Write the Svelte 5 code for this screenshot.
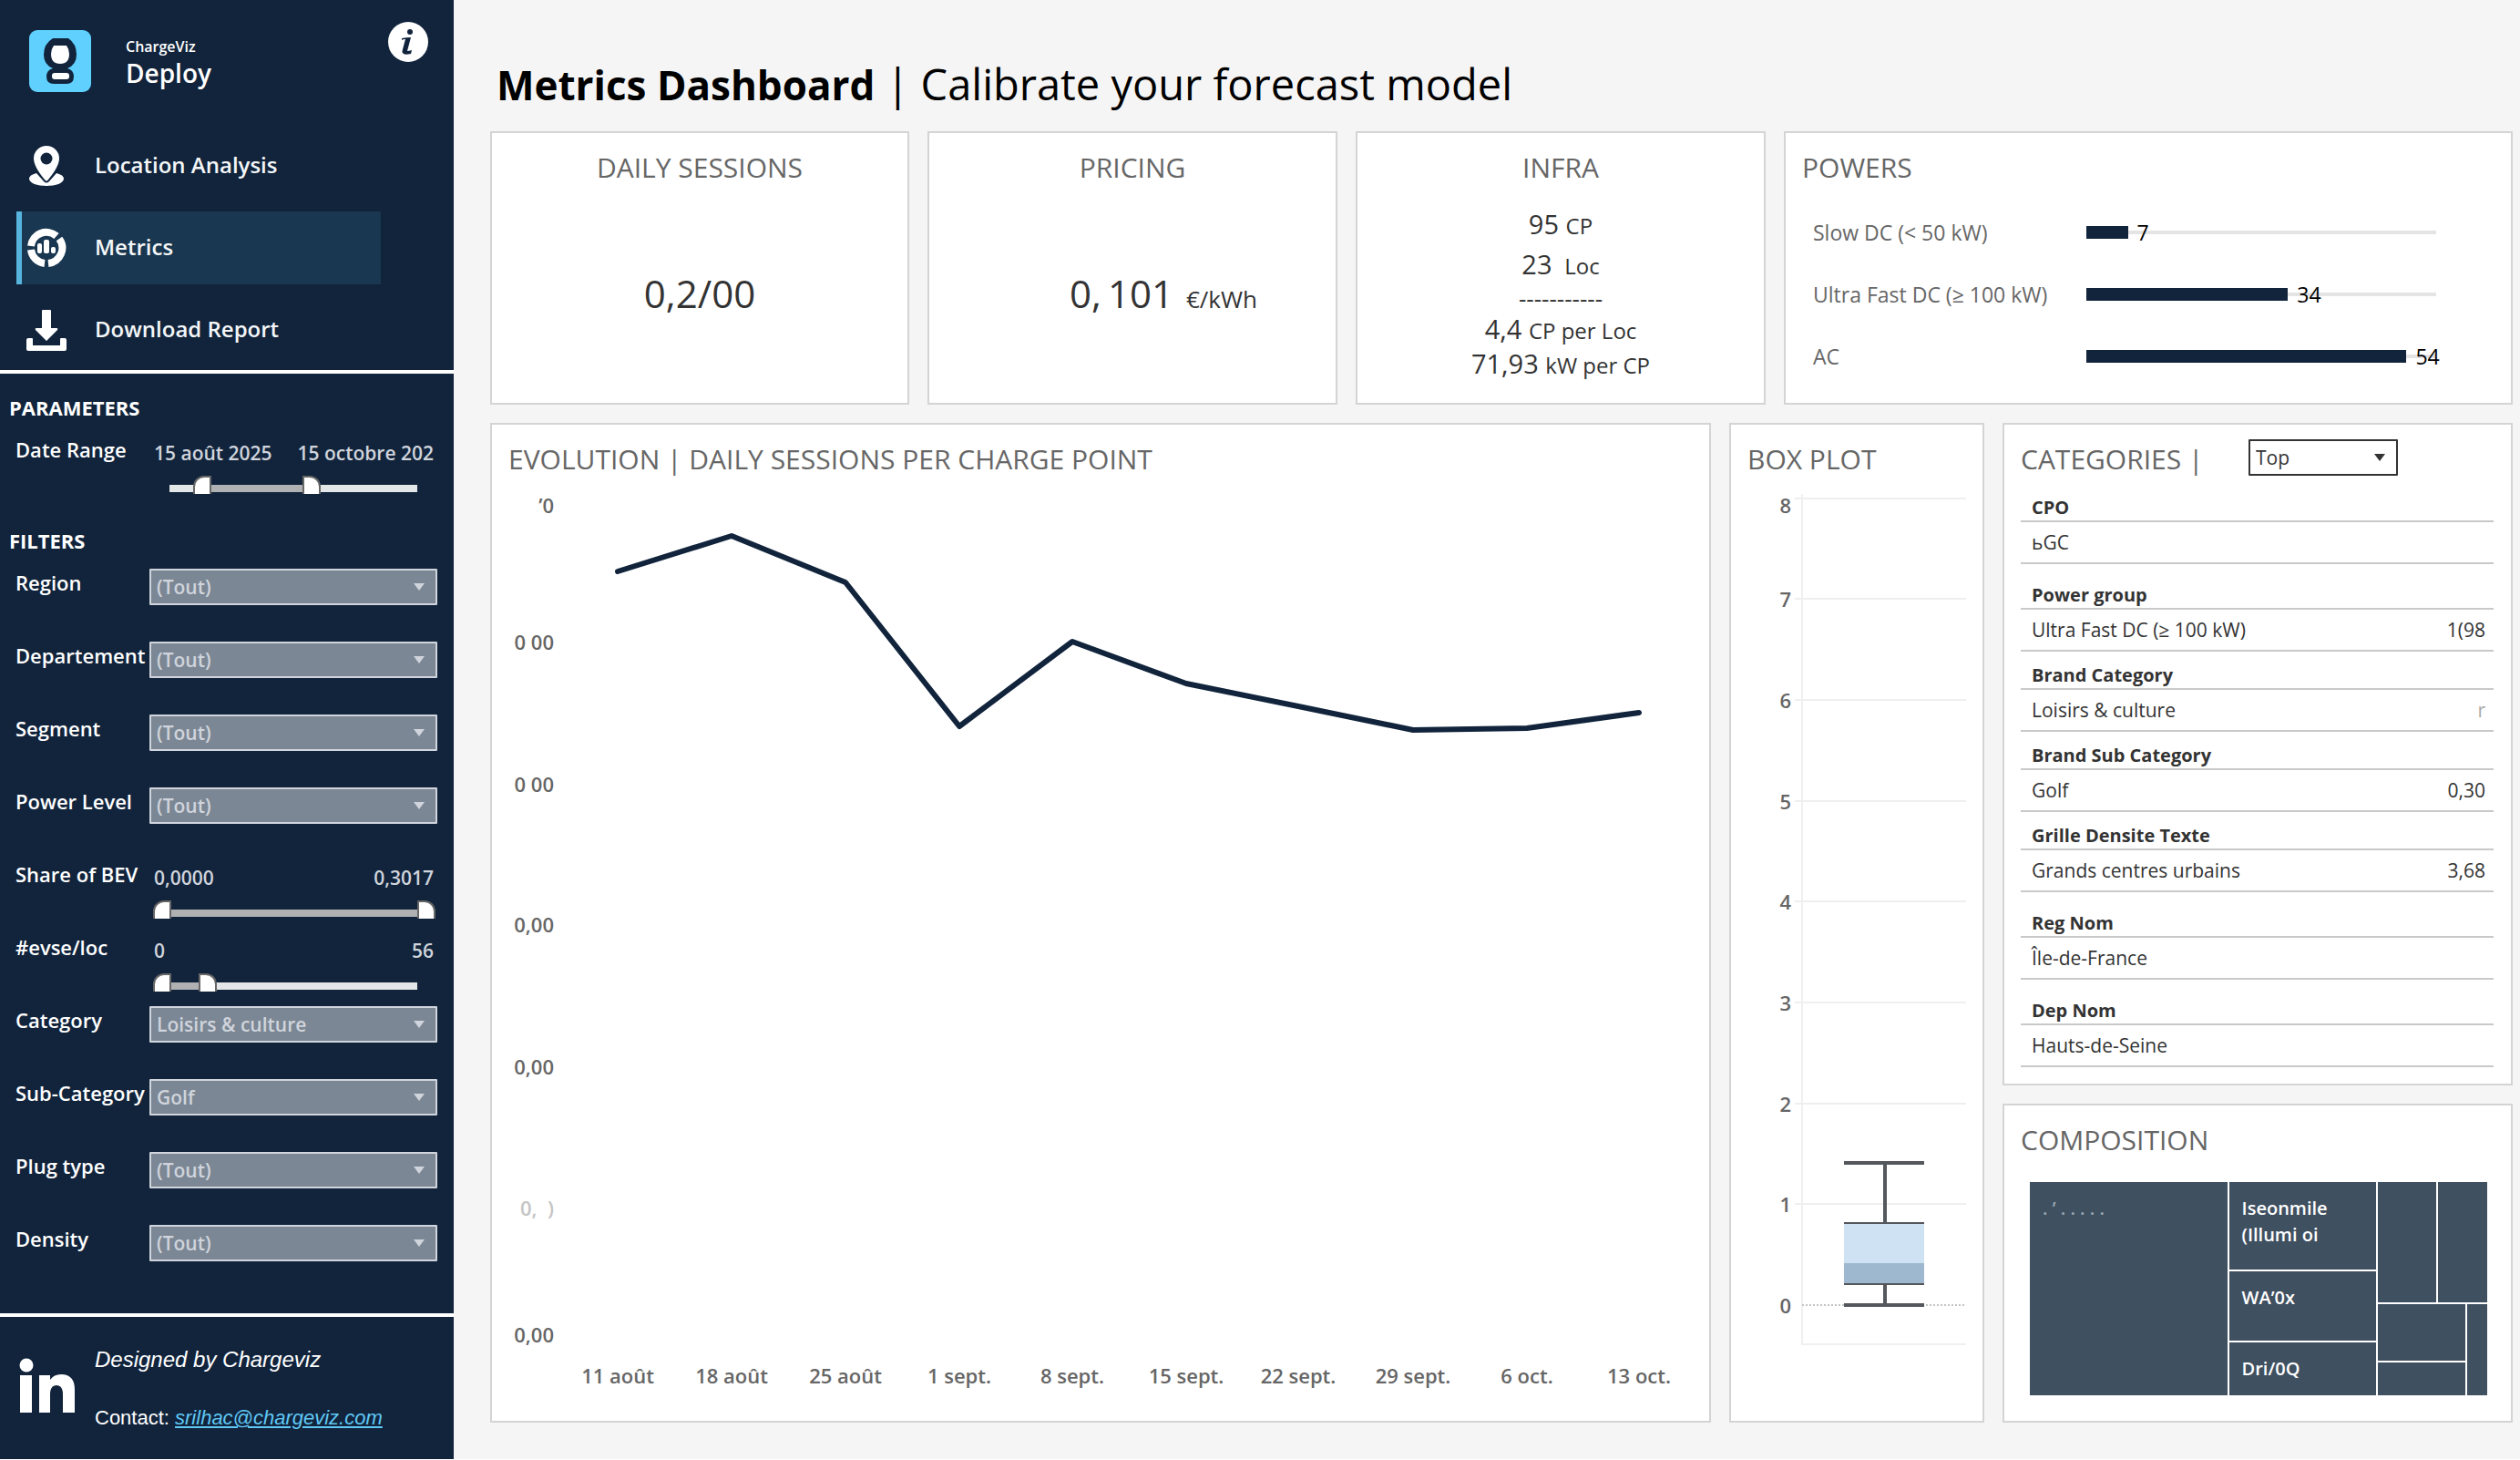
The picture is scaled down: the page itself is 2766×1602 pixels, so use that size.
<script>
  let filters = $state([
    { id: 'region', label: 'Region', type: 'select', value: '(Tout)' },
    { id: 'departement', label: 'Departement', type: 'select', value: '(Tout)' },
    { id: 'segment', label: 'Segment', type: 'select', value: '(Tout)' },
    { id: 'power', label: 'Power Level', type: 'select', value: '(Tout)' },
    { id: 'bev', label: 'Share of BEV', type: 'range', from: '0,0000', to: '0,3017', low: 0, high: 270 },
    { id: 'evse', label: '#evse/loc', type: 'range', from: '0', to: '56', low: 0, high: 30 },
    { id: 'category', label: 'Category', type: 'select', value: 'Loisirs & culture' },
    { id: 'subcategory', label: 'Sub-Category', type: 'select', value: 'Golf' },
    { id: 'plug', label: 'Plug type', type: 'select', value: '(Tout)' },
    { id: 'density', label: 'Density', type: 'select', value: '(Tout)' }
  ]);

  let dates = $state({
    id: 'dates',
    label: 'Date Range',
    type: 'range',
    from: '15 août 2025',
    to: '15 octobre 202',
    low: 44,
    high: 144
  });

  const powers = [
    { name: 'Slow DC (< 50 kW)', count: 7 },
    { name: 'Ultra Fast DC (≥ 100 kW)', count: 34 },
    { name: 'AC', count: 54 }
  ];
  const powerMax = 59;

  const categories = [
    { title: 'CPO', name: 'ьGC', value: '' },
    { title: 'Power group', name: 'Ultra Fast DC (≥ 100 kW)', value: '1(98', spaced: true },
    { title: 'Brand Category', name: 'Loisirs & culture', value: 'r', faint: true },
    { title: 'Brand Sub Category', name: 'Golf', value: '0,30' },
    { title: 'Grille Densite Texte', name: 'Grands centres urbains', value: '3,68' },
    { title: 'Reg Nom', name: 'Île-de-France', value: '', spaced: true },
    { title: 'Dep Nom', name: 'Hauts-de-Seine', value: '', spaced: true }
  ];

  // chart coordinates, one unit per pixel of the drawing area
  const weeks = [
    { label: '11 août', x: 138, y: 85 },
    { label: '18 août', x: 263, y: 46 },
    { label: '25 août', x: 388, y: 97 },
    { label: '1 sept.', x: 513, y: 255 },
    { label: '8 sept.', x: 637, y: 162 },
    { label: '15 sept.', x: 762, y: 208 },
    { label: '22 sept.', x: 885, y: 233 },
    { label: '29 sept.', x: 1011, y: 259 },
    { label: '6 oct.', x: 1136, y: 257 },
    { label: '13 oct.', x: 1259, y: 240 }
  ];
  const linePoints = weeks.map((w) => `${w.x},${w.y}`).join(' ');

  const yTicks = [
    { label: '’0', y: 12 },
    { label: '0 00', y: 162 },
    { label: '0 00', y: 318 },
    { label: '0,00', y: 472 },
    { label: '0,00', y: 628 },
    { label: '0,\u00a0\u00a0)', y: 783, faint: true },
    { label: '0,00', y: 922 }
  ];

  const boxTicks = [8, 7, 6, 5, 4, 3, 2, 1, 0];
  const boxY = (v) => 890 - v * 111 + Math.round(v / 3);
</script>

{#snippet arrow()}
  <svg class="arrow" viewBox="0 0 12 8" width="12" height="8" aria-hidden="true">
    <path d="M0 0h12L6 8z" fill="currentColor" />
  </svg>
{/snippet}

{#snippet range(f)}
  <div class="range">
    <div class="bounds"><span>{f.from}</span><span>{f.to}</span></div>
    <div class="slider">
      <div class="rail"></div>
      <div class="fill" style="margin-left: {20 + f.low}px; width: {f.high - f.low}px"></div>
      <input id={f.id} class="low" type="range" min="0" max="270" bind:value={f.low} aria-label="{f.label} min" />
      <input class="high" type="range" min="0" max="270" bind:value={f.high} aria-label="{f.label} max" />
    </div>
  </div>
{/snippet}

<div class="page">
  <aside>
    <div class="brand">
      <svg class="logo" viewBox="0 0 68 68" width="68" height="68" aria-hidden="true">
        <rect width="68" height="68" rx="9" fill="#60d1ff" />
        <path d="M26 9h17q9 6 9 18 0 11-10 15 7 2 7 9 0 8-8 8H27q-8 0-8-8 0-7 7-9-10-4-10-15 0-12 10-18z" fill="#11243c" />
        <path d="M27 17h14q3 4 3 9 0 11-10 11T24 26q0-5 3-9z" fill="#fff" />
        <rect x="25" y="47" width="19" height="7" rx="3" fill="#fff" />
      </svg>
      <div class="brand-name">
        <small>ChargeViz</small>
        <strong>Deploy</strong>
      </div>
      <button class="info" aria-label="Information">
        <svg viewBox="0 0 46 46" width="46" height="46" aria-hidden="true">
          <circle cx="23" cy="23" r="22" fill="#fff" />
          <circle cx="25" cy="12" r="3" fill="#11243c" />
          <path d="M16 19q5-1 10-1l-4 15q2 0 5-1l-1 4q-8 2-9-1-1-1 0-4l3-11q-3 0-4 1z" fill="#11243c" />
        </svg>
      </button>
    </div>

    <nav>
      <a href="#location">
        <svg viewBox="0 0 44 48" width="44" height="48" aria-hidden="true">
          <path d="M11 32q-8 2-8 6c0 5 9 8 19 8s19-3 19-8q0-4-8-6l-8 9q-3 3-6 0z" fill="#fff" />
          <path d="M22 2a14 14 0 0 1 14 14c0 8-8 18-12 23q-2 3-4 0C16 34 8 24 8 16A14 14 0 0 1 22 2z" fill="#fff" />
          <circle cx="22" cy="16" r="6.500" fill="#11243c" />
        </svg>
        <span>Location Analysis</span>
      </a>
      <a href="#metrics" class="active">
        <svg viewBox="0 0 44 44" width="44" height="44" aria-hidden="true">
          <g fill="none" stroke="#fff" stroke-width="8">
            <path d="M5 20A17 17 0 0 1 33 9" />
            <path d="M36 12A17 17 0 0 1 24 39" />
            <path d="M20 39A17 17 0 0 1 5 24" />
          </g>
          <g fill="#fff">
            <rect x="12" y="17" width="5" height="11" rx="2" />
            <rect x="19" y="13" width="6" height="15" rx="2" />
            <rect x="27" y="21" width="5" height="7" rx="2" />
          </g>
        </svg>
        <span>Metrics</span>
      </a>
      <a href="#download">
        <svg viewBox="0 0 44 48" width="44" height="48" aria-hidden="true">
          <path d="M18 2h8q1 0 1 1v19h6q2 0 1 2L23 35q-1 2-2 0L10 24q-1-2 1-2h6V3q0-1 1-1z" fill="#fff" />
          <path d="M2 33h4q1 0 1 1v7h30v-7q0-1 1-1h4q2 0 2 2v10q0 2-2 2H2q-2 0-2-2V35q0-2 2-2z" fill="#fff" />
        </svg>
        <span>Download Report</span>
      </a>
    </nav>

    <section class="settings">
      <h2>PARAMETERS</h2>
      <div class="field">
        <label for={dates.id}>{dates.label}</label>
        {@render range(dates)}
      </div>
      <h2 class="second">FILTERS</h2>
      {#each filters as f}
        <div class="field">
          <label for={f.id}>{f.label}</label>
          {#if f.type === 'range'}
            {@render range(f)}
          {:else}
            <div class="select">
              <select id={f.id}><option>{f.value}</option></select>
              {@render arrow()}
            </div>
          {/if}
        </div>
      {/each}
    </section>

    <footer>
      <svg viewBox="0 0 62 62" width="62" height="62" aria-hidden="true">
        <g fill="#fff">
          <circle cx="8" cy="8" r="7.500" />
          <rect x="1" y="19" width="13" height="41" />
          <path d="M22 19h12v5q4-6 12-6 15 0 15 17v25H48V40q0-10-7-10t-7 10v20H22z" />
        </g>
      </svg>
      <div class="credits">
        <em>Designed by Chargeviz</em>
        <p>Contact: <a href="mailto:srilhac@chargeviz.com">srilhac@chargeviz.com</a></p>
      </div>
    </footer>
  </aside>

  <main>
    <h1><b>Metrics Dashboard</b> | Calibrate your forecast model</h1>

    <div class="kpis">
      <article class="card center">
        <h3>DAILY SESSIONS</h3>
        <p class="figure">0,2/00</p>
      </article>
      <article class="card center">
        <h3>PRICING</h3>
        <p class="figure with-unit">0,&thinsp;101 <small>€/kWh</small></p>
      </article>
      <article class="card center">
        <h3>INFRA</h3>
        <div class="infra">
          <p class="tall">95 <small>CP</small></p>
          <p class="tall">23 <small>&nbsp;Loc</small></p>
          <p class="dashes">-----------</p>
          <p>4,4 <small>CP per Loc</small></p>
          <p>71,93 <small>kW per CP</small></p>
        </div>
      </article>
      <article class="card">
        <h3>POWERS</h3>
        <div class="powers">
          {#each powers as p}
            <span class="power-name">{p.name}</span>
            <div class="power-track">
              <div class="power-bar" style="width: {(p.count / powerMax) * 100}%"></div>
              <span>{p.count}</span>
            </div>
          {/each}
        </div>
      </article>
    </div>

    <div class="charts">
      <article class="card">
        <h3>EVOLUTION | DAILY SESSIONS PER CHARGE POINT</h3>
        <svg class="chart" viewBox="0 0 1336 1016" role="img" aria-label="Daily sessions per charge point">
          {#each yTicks as t}
            <text class:faint={t.faint} x="68" y={t.y + 9} text-anchor="end">{t.label}</text>
          {/each}
          <polyline points={linePoints} fill="none" stroke="#11243c" stroke-width="6" stroke-linejoin="round" stroke-linecap="round" />
          {#each weeks as w}
            <text x={w.x} y="976" text-anchor="middle">{w.label}</text>
          {/each}
        </svg>
      </article>

      <article class="card">
        <h3>BOX PLOT</h3>
        <svg class="chart" viewBox="0 0 276 1016" role="img" aria-label="Box plot">
          <path d="M78 0v933h180" fill="none" stroke="#f0f0f0" stroke-width="2" />
          {#each boxTicks as v}
            {#if v > 0}
              <path d="M70 {boxY(v)}h188" stroke="#efefef" stroke-width="2" />
            {/if}
            <text x="66" y={Math.max(boxY(v), 12) + 9} text-anchor="end">{v}</text>
          {/each}
          <path d="M78 890h180" stroke="#c4c4c4" stroke-width="2" stroke-dasharray="2 2" />
          <rect x="124" y="801" width="88" height="43" fill="#cfe2f3" />
          <rect x="124" y="844" width="88" height="22" fill="#9eb8cf" />
          <g stroke="#54575c">
            <path d="M124 800h88M124 867h88" stroke-width="2" />
            <path d="M124 734h88M124 890h88M169 734v66M169 868v22" stroke-width="4" />
          </g>
        </svg>
      </article>

      <div class="stack">
        <article class="card">
          <div class="card-head">
            <h3><label for="rank">CATEGORIES |</label></h3>
            <div class="select light">
              <select id="rank"><option>Top</option></select>
              {@render arrow()}
            </div>
          </div>
          <table>
            <tbody>
              {#each categories as c}
                <tr class:spaced={c.spaced}><th colspan="2">{c.title}</th></tr>
                <tr>
                  <td>{c.name}</td>
                  <td class="value" class:faint={c.faint}>{c.value}</td>
                </tr>
              {/each}
            </tbody>
          </table>
        </article>

        <article class="card">
          <h3>COMPOSITION</h3>
          <div class="treemap">
            <div class="tile dim">. ’ . . . . .</div>
            <div class="tiles middle">
              <div class="tile">Iseonmile<br />(Illumi oi</div>
              <div class="tile">WA’0x</div>
              <div class="tile">Dri/0Q</div>
            </div>
            <div class="tiles last">
              <div class="tiles top"><div class="tile"></div><div class="tile"></div></div>
              <div class="tiles bottom">
                <div class="tiles pair"><div class="tile"></div><div class="tile"></div></div>
                <div class="tile"></div>
              </div>
            </div>
          </div>
        </article>
      </div>
    </div>
  </main>
</div>

<style>
  :global(body) {
    margin: 0;
    background: #fff;
    font-family: "Trebuchet MS", "Open Sans", "Noto Sans", sans-serif;
    font-size: 24px;
    color: #333;
  }

  h1, h2, h3, p {
    margin: 0;
    font-weight: 400;
  }

  .page {
    display: grid;
    grid-template-columns: 498px 1fr;
    background: #f5f5f5;
  }

  /* sidebar */
  aside {
    display: flex;
    flex-direction: column;
    background: #11243c;
    color: #fff;
    font-weight: 600;
  }

  .brand {
    display: flex;
    align-items: flex-start;
    padding: 33px 27px 0 32px;
    height: 102px;
  }

  .brand-name {
    display: grid;
    flex: 1;
    padding: 8px 0 0 38px;
  }

  .brand-name small {
    font-size: 16px;
    line-height: 20px;
  }

  .brand-name strong {
    font-size: 28px;
    line-height: 38px;
    font-weight: 600;
  }

  .info {
    margin-top: -10px;
    padding: 0;
    border: 0;
    background: none;
    cursor: pointer;
  }

  .info svg {
    display: block;
  }

  nav {
    display: grid;
    gap: 10px;
    padding: 7px 80px 4px 18px;
    border-bottom: 4px solid #fff;
  }

  nav a {
    display: grid;
    grid-template-columns: 44px 1fr;
    align-items: center;
    gap: 31px;
    height: 80px;
    padding-left: 5px;
    border-left: 6px solid transparent;
    color: #f4f6f8;
    text-decoration: none;
    font-size: 24px;
  }

  nav span {
    padding-bottom: 4px;
  }

  nav a.active {
    background: #193750;
    border-color: #56b4de;
  }

  .settings {
    padding: 22px 18px 17px 0;
    border-bottom: 4px solid #fff;
  }

  h2 {
    margin: 0 0 14px 10px;
    padding-bottom: 2px;
    font-size: 22px;
    line-height: 30px;
    font-weight: 700;
  }

  h2.second {
    margin-top: 20px;
  }

  .field {
    display: grid;
    grid-template-columns: 147px 1fr;
    align-items: start;
    height: 80px;
    padding-left: 17px;
  }

  .field label {
    font-size: 22px;
    line-height: 30px;
    white-space: nowrap;
  }

  .select {
    display: grid;
    grid-template-columns: 1fr 26px;
    align-items: center;
    color: #d0d4dc;
  }

  .select select {
    grid-area: 1 / 1 / 2 / 3;
    appearance: none;
    box-sizing: border-box;
    width: 100%;
    height: 40px;
    padding: 0 30px 0 6px;
    border: 2px solid #d0d4dc;
    border-radius: 1px;
    background: #7b8794;
    color: inherit;
    font: inherit;
    font-size: 21px;
  }

  .arrow {
    grid-area: 1 / 2;
    pointer-events: none;
  }

  .range {
    padding: 4px 2px 0 4px;
  }

  .bounds {
    display: flex;
    justify-content: space-between;
    padding: 0 2px 0 1px;
    color: #d0d4dc;
    font-size: 21px;
    line-height: 30px;
    white-space: nowrap;
  }

  .slider {
    display: grid;
    margin-top: 10px;
  }

  .slider > * {
    grid-area: 1 / 1;
  }

  .rail,
  .fill {
    height: 8px;
    margin-top: 10px;
  }

  .rail {
    margin-left: 18px;
    margin-right: 20px;
    background: #e4e7e7;
  }

  .fill {
    background: #afb1b3;
  }

  .slider input {
    appearance: none;
    height: 20px;
    margin: 0;
    background: none;
    pointer-events: none;
  }

  .slider .low {
    margin-right: 20px;
  }

  .slider .high {
    margin-left: 20px;
  }

  .slider input::-webkit-slider-thumb {
    appearance: none;
    box-sizing: border-box;
    width: 20px;
    height: 20px;
    border: 2px solid #666;
    border-bottom: 0;
    background: #fff;
    pointer-events: auto;
  }

  .slider .low::-webkit-slider-thumb {
    border-radius: 12px 0 0 0;
  }

  .slider .high::-webkit-slider-thumb {
    border-radius: 0 12px 0 0;
  }

  footer {
    display: grid;
    grid-template-columns: 62px 1fr;
    align-items: start;
    gap: 21px;
    padding: 45px 20px 0 21px;
    font-family: "Liberation Sans", Arial, sans-serif;
    font-weight: 400;
  }

  .credits {
    margin-top: -14px;
  }

  .credits em {
    display: block;
    font-size: 24px;
    line-height: 32px;
  }

  .credits p {
    margin-top: 32px;
    font-size: 22px;
    line-height: 32px;
  }

  .credits a {
    color: #60c8f5;
    font-style: italic;
  }

  /* content */
  main {
    padding: 60px 8px 40px 40px;
  }

  h1 {
    padding-left: 7px;
    margin-bottom: 20px;
    color: #000;
    font-size: 47px;
    line-height: 64px;
  }

  h1 b {
    font-size: 44px;
    line-height: 1;
  }

  .card {
    display: flex;
    flex-direction: column;
    border: 2px solid #d4d4d4;
    background: #fff;
  }

  h3 {
    padding: 18px 18px 0;
    color: #666;
    font-size: 30px;
    line-height: 40px;
  }

  .center {
    text-align: center;
  }

  .kpis {
    display: grid;
    grid-template-columns: 46fr 45fr 45fr 80fr;
    gap: 20px;
    margin-bottom: 20px;
  }

  .figure {
    display: flex;
    align-items: baseline;
    justify-content: center;
    gap: 14px;
    padding-top: 86px;
    font-size: 42px;
    line-height: 64px;
  }

  .figure.with-unit {
    padding-left: 68px;
  }

  .figure small {
    font-size: 26px;
  }

  .infra {
    padding: 20px 0 24px;
    font-size: 29px;
    line-height: 38px;
  }

  .infra small {
    font-size: 24px;
    line-height: 1;
  }

  .infra .tall {
    line-height: 44px;
  }

  .infra .dashes {
    font-size: 26px;
    line-height: 30px;
  }

  .powers {
    display: grid;
    grid-template-columns: 300px 1fr;
    grid-auto-rows: 68px;
    align-items: center;
    padding: 17px 82px 0 30px;
    font-size: 23px;
  }

  .power-name {
    color: #666;
  }

  .power-track {
    display: flex;
    align-items: center;
    gap: 10px;
    height: 32px;
    background: linear-gradient(#e4e4e4, #e4e4e4) center / 100% 4px no-repeat;
    color: #000;
  }

  .power-bar {
    flex-shrink: 0;
    height: 14px;
    background: #11243c;
  }

  .charts {
    display: grid;
    grid-template-columns: 134fr 28fr 56fr;
    gap: 20px;
  }

  .chart {
    display: block;
    width: 100%;
    margin-top: 18px;
    overflow: visible;
  }

  .chart text {
    fill: #666;
    font-size: 22px;
    font-weight: 600;
  }

  .chart text.faint {
    fill: #c4c4c4;
  }

  .stack {
    display: grid;
    grid-template-rows: auto 1fr;
    gap: 20px;
  }

  .card-head {
    display: grid;
    grid-template-columns: 268px 164px;
    align-items: start;
  }

  .card-head h3 {
    white-space: nowrap;
  }

  .light {
    margin-top: 16px;
    color: #333;
  }

  .light select {
    border-color: #333;
    background: #fff;
  }

  table {
    margin: 6px 19px 18px 18px;
    border-collapse: collapse;
    font-size: 21px;
    line-height: 28px;
  }

  th,
  td {
    box-sizing: border-box;
    height: 46px;
    padding: 0 9px 0 12px;
    border-bottom: 2px solid #c9c9c9;
    text-align: left;
  }

  th {
    height: 42px;
    font-size: 20px;
    vertical-align: bottom;
  }

  .spaced th {
    height: 50px;
  }

  .value {
    text-align: right;
  }

  .value.faint {
    color: #aaa;
  }

  .treemap {
    display: grid;
    grid-template-columns: 217fr 162fr 120fr;
    gap: 2px;
    height: 234px;
    margin: 26px 26px 28px 28px;
    color: #fff;
    font-size: 20px;
    line-height: 29px;
    font-weight: 600;
  }

  .tiles {
    display: grid;
    gap: 2px;
  }

  .tile {
    padding: 14px 0 0 14px;
    background: #3f5061;
    overflow: hidden;
  }

  .tile.dim {
    color: #9aa5b0;
  }

  .middle {
    grid-template-rows: 96fr 76fr 58fr;
  }

  .last {
    grid-template-rows: 132fr 100fr;
  }

  .top {
    grid-template-columns: 64fr 54fr;
  }

  .bottom {
    grid-template-columns: 96fr 22fr;
  }

  .pair {
    grid-template-rows: 62fr 36fr;
  }

  .top .tile,
  .bottom .tile {
    padding: 0;
  }
</style>
